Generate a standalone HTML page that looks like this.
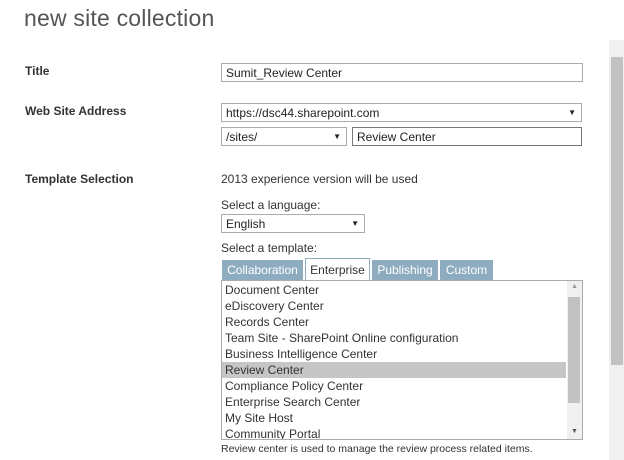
<!DOCTYPE html>
<html><head><style>
body{margin:0;width:624px;height:460px;background:#fff;font-family:"Liberation Sans",sans-serif;overflow:hidden;position:relative;color:#333}
.a{position:absolute}
h1{position:absolute;left:24px;top:5px;margin:0;font-weight:normal;font-size:23px;color:#555;letter-spacing:0.2px}
.lbl{font-weight:bold;font-size:12px;color:#333;left:25px}
.t{font-size:12px;color:#333}
.box{border:1px solid #ababab;box-sizing:border-box;background:#fff;font-size:12px;padding:2px 4px;color:#222}
.arr{position:absolute;right:5px;top:4px;font-size:8px}
.tab{position:absolute;top:260px;height:20px;box-sizing:border-box;background:#8eacbf;color:#fff;font-size:12px;line-height:20px;text-align:center}
.it{position:absolute;left:3px;font-size:12px;color:#333;height:16px;line-height:16px}
</style></head><body>
<h1>new site collection</h1>
<div class="a lbl" style="top:64px">Title</div>
<div class="a lbl" style="top:104px">Web Site Address</div>
<div class="a lbl" style="top:172px">Template Selection</div>
<div class="a box" style="left:221px;top:63px;width:362px;height:19px">Sumit_Review Center</div>
<div class="a box" style="left:221px;top:103px;width:361px;height:19px">https://dsc44.sharepoint.com<span class="arr">▼</span></div>
<div class="a box" style="left:221px;top:127px;width:126px;height:19px">/sites/<span class="arr">▼</span></div>
<div class="a box" style="left:352px;top:127px;width:230px;height:19px;border-color:#777">Review Center</div>
<div class="a t" style="left:221px;top:172px">2013 experience version will be used</div>
<div class="a t" style="left:221px;top:198px">Select a language:</div>
<div class="a box" style="left:221px;top:214px;width:144px;height:19px">English<span class="arr">▼</span></div>
<div class="a t" style="left:221px;top:241px">Select a template:</div>
<div class="tab" style="left:222px;width:81px">Collaboration</div>
<div class="tab" style="left:305px;width:65px;top:258px;height:23px;background:#fff;color:#333;border:1px solid #8eacbf;border-bottom:none;line-height:22px">Enterprise</div>
<div class="tab" style="left:372px;width:66px">Publishing</div>
<div class="tab" style="left:440px;width:53px">Custom</div>
<div class="a" style="left:221px;top:280px;width:362px;height:160px;border:1px solid #ababab;box-sizing:border-box;overflow:hidden">
<div class="a" style="left:0;top:81px;width:344px;height:16px;background:#c6c6c6"></div>
<div class="it" style="top:1px">Document Center</div>
<div class="it" style="top:17px">eDiscovery Center</div>
<div class="it" style="top:33px">Records Center</div>
<div class="it" style="top:49px">Team Site - SharePoint Online configuration</div>
<div class="it" style="top:65px">Business Intelligence Center</div>
<div class="it" style="top:81px">Review Center</div>
<div class="it" style="top:97px">Compliance Policy Center</div>
<div class="it" style="top:113px">Enterprise Search Center</div>
<div class="it" style="top:129px">My Site Host</div>
<div class="it" style="top:145px">Community Portal</div>
<div class="a" style="left:345px;top:0;width:15px;height:158px;background:#f0f0f0"></div>
<div class="a" style="left:346px;top:16px;width:12px;height:106px;background:#c2c2c2"></div>
<div class="a" style="left:349px;top:2px;font-size:7px;color:#999">▲</div>
<div class="a" style="left:349px;top:147px;font-size:7px;color:#555">▼</div>
</div>
<div class="a" style="left:221px;top:443px;font-size:10.5px;color:#333">Review center is used to manage the review process related items.</div>
<div class="a" style="left:609px;top:40px;width:15px;height:420px;background:#f0f0f0"></div>
<div class="a" style="left:611px;top:57px;width:12px;height:308px;background:#c2c2c2"></div>
</body></html>
